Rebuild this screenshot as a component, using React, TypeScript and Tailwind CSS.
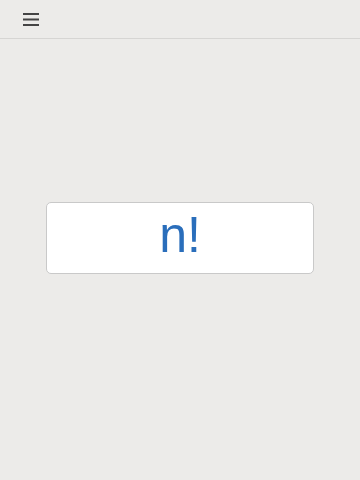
import type { FC } from "react";

const MenuIcon: FC = () => (
  <svg width="16" height="13" viewBox="0 0 16 13" className="block">
    <rect x="0" y="0" width="16" height="2" fill="#444" />
    <rect x="0" y="5.5" width="16" height="2" fill="#444" />
    <rect x="0" y="11" width="16" height="2" fill="#444" />
  </svg>
);

const App: FC = () => {
  return (
    <div
      className="flex h-[480px] w-full flex-col bg-[#ecebe9]"
      style={{ fontFamily: '"Liberation Sans", Arial, sans-serif' }}
    >
      <header className="flex h-[39px] items-center border-b border-[#d6d5d3] pl-[23px]">
        <button className="p-0">
          <MenuIcon />
        </button>
      </header>

      <main className="flex flex-1 items-center justify-center pb-[44px]">
        <div className="flex h-[72px] w-[268px] items-center justify-center rounded-[5px] border border-[#c9c9c9] bg-white pb-[6px]">
          <span className="text-[50px] leading-none text-[#2a6ebb]">n!</span>
        </div>
      </main>
    </div>
  );
};

export default App;
